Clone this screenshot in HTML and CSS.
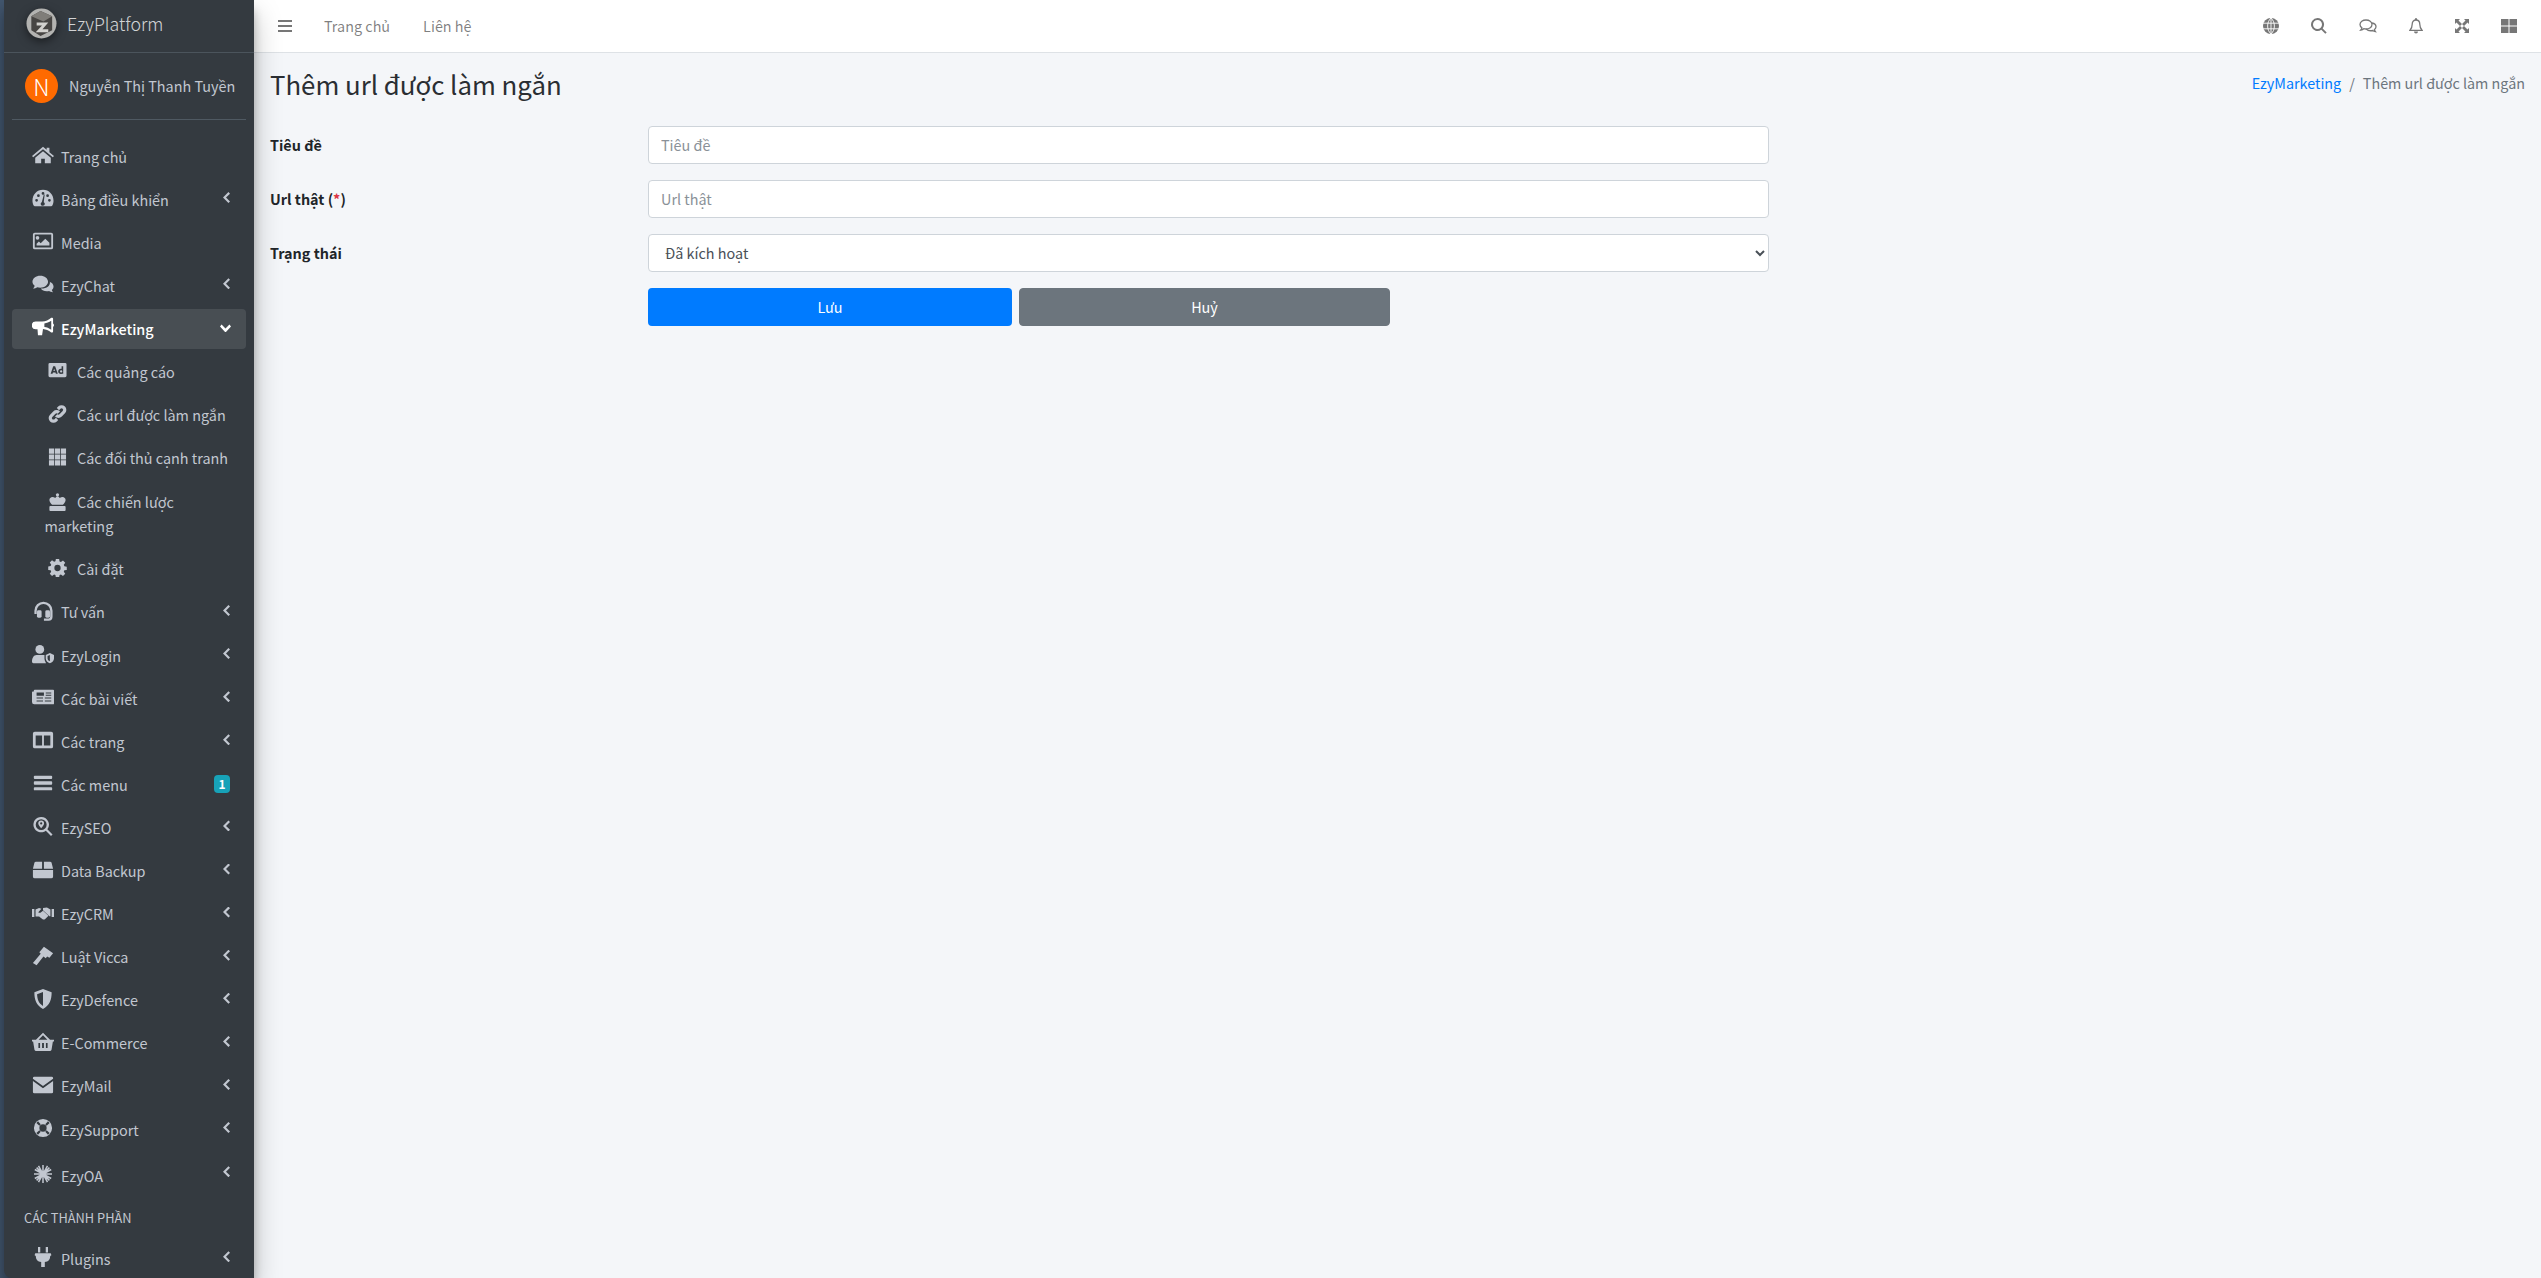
FILE: index.html
```html
<!DOCTYPE html>
<html lang="vi">
<head>
<meta charset="utf-8">
<title>Thêm url được làm ngắn</title>
<link rel="stylesheet" href="styles.css">
</head>
<body>
<div class="app">
<aside class="sidebar">
  <div class="brand">
    <svg class="logo" viewBox="0 0 32 32"><circle cx="16" cy="16" r="15.500" fill="#b3b3b1"/><path d="M15 3l12 5.500V23l-12 6-9.500-6V8.500z" fill="#474543"/><path d="M15 3l12 5.500-9 5.500-12.500-5.500z" fill="#7f7d79"/><path d="M11 15h12l-6 7h6v3H10l6.500-7H11z" fill="#d2d1ce"/></svg>
    <span class="brand-text">EzyPlatform</span>
  </div>
  <div class="user"><span class="avatar">N</span><span class="user-name">Nguyễn Thị Thanh Tuyền</span></div>
  <nav class="menu">
    <a class="item"><svg class="ic" viewBox="0 0 24 20"><path d="M12 1L0 11l1.300 1.400L12 3.600l10.700 8.800L24 11l-5-4.100V2h-3v2.400zM3.500 13v6h6.500v-5h4v5h6.500v-6L12 6z"/></svg><span>Trang chủ</span></a>
    <a class="item"><svg class="ic" viewBox="0 0 24 20"><path fill-rule="evenodd" d="M12 1C5.400 1 .5 6.100.5 13c0 2 .5 3.800 1.300 5.300.3.500.8.700 1.300.7h17.800c.5 0 1-.2 1.300-.7.8-1.500 1.300-3.300 1.300-5.300C23.500 6.100 18.600 1 12 1zM5 14a1.500 1.500 0 110-3 1.500 1.500 0 010 3zm2-5a1.500 1.500 0 110-3 1.500 1.500 0 010 3zm5-2.500a1.500 1.500 0 110-3 1.500 1.500 0 010 3zM19 14a1.500 1.500 0 110-3 1.500 1.500 0 010 3zm-2-5a1.500 1.500 0 110-3 1.500 1.500 0 010 3zm-3 7.500a2.300 2.300 0 01-4.500.4c-.2-1 .3-2 1.200-2.400L13 6l.8.3-1 8.200c.7.400 1.200 1.200 1.200 2z"/></svg><span>Bảng điều khiển</span><i class="chev"></i></a>
    <a class="item"><svg class="ic" viewBox="0 0 24 20"><path fill-rule="evenodd" d="M3 1h18a2 2 0 012 2v14a2 2 0 01-2 2H3a2 2 0 01-2-2V3a2 2 0 012-2zm0 2v14h18V3zm3 1.500a2 2 0 110 4 2 2 0 010-4zM5 15v-2l2.500-2.500 2 2 5-5 4.500 4.500V15z"/></svg><span>Media</span></a>
    <a class="item"><svg class="ic" viewBox="0 0 24 20"><path d="M9 1c4.700 0 8.500 2.900 8.500 6.500S13.700 14 9 14c-1.100 0-2.200-.2-3.200-.5C4.600 14.400 3 15 1 15c1-1 1.700-2.300 1.900-3.200C1.100 10.600.5 9 .5 7.500.5 3.900 4.300 1 9 1z"/><path d="M19 7.500c2.600.7 4.500 2.800 4.500 5.200 0 1.500-.7 2.800-1.900 3.800.2.900.9 1.800 1.400 2.500-1.800 0-3.400-.6-4.300-1.300-.8.200-1.700.3-2.700.3-2.800 0-5.200-1.200-6.300-3 6 .3 10.500-3 9.800-7.500z"/></svg><span>EzyChat</span><i class="chev"></i></a>
    <a class="item active"><svg class="ic" viewBox="0 0 24 20"><path fill-rule="evenodd" d="M21 0h1a1 1 0 011 1v5.300c.6.400 1 1 1 1.700s-.4 1.300-1 1.700V15a1 1 0 01-1 1h-1c-3-2.500-6-3.500-9-3.900L11 19H6.500L6 12.500H4A4 4 0 014 4h7c4 0 7-1.500 10-4zm0 3.200c-2.400 1.700-5 2.600-7.500 2.900v4c2.500.3 5.100 1.200 7.500 2.900z"/></svg><span>EzyMarketing</span><i class="chev down"></i></a>
    <a class="item sub"><svg class="ic" viewBox="0 0 20 16"><path fill-rule="evenodd" d="M2 .5h16A1.500 1.500 0 0119.500 2v12a1.500 1.500 0 01-1.500 1.500H2A1.500 1.500 0 01.5 14V2A1.500 1.500 0 012 .5zM5.500 4L2.800 12h2l.4-1.300h2.700l.4 1.300h2L7.500 4zm1 2.600l.8 2.500H5.700zM16 4h-1.700v2.700a2.800 2.800 0 10.2 5.300H16zm-2.200 4.300a1.200 1.200 0 11.100 2.400 1.200 1.200 0 01-.1-2.400z"/></svg><span>Các quảng cáo</span></a>
    <a class="item sub"><svg class="ic" viewBox="0 0 20 20"><path fill="none" stroke-width="3.600" d="M8.500 11.500a3.500 3.500 0 005 0L17 8a3.500 3.500 0 00-5-5l-1.500 1.500M11.500 8.500a3.500 3.500 0 00-5 0L3 12a3.500 3.500 0 005 5l1.500-1.500"/></svg><span>Các url được làm ngắn</span></a>
    <a class="item sub"><svg class="ic" viewBox="0 0 20 18"><path d="M1 0h5.500v5.500H1zM7.300 0h5.400v5.500H7.300zM13.500 0H19v5.500h-5.500zM1 6.300h5.500v5.400H1zM7.300 6.300h5.400v5.400H7.300zM13.500 6.300H19v5.400h-5.500zM1 12.500h5.500V18H1zM7.300 12.500h5.400V18H7.300zM13.500 12.500H19V18h-5.500z"/></svg><span>Các đối thủ cạnh tranh</span></a>
    <a class="item sub wrap"><svg class="ic" viewBox="0 0 20 20"><circle cx="10" cy="2" r="1.800"/><path d="M10 3.500c1 0 2 1 2.500 2 1-.8 2-1 3-1 2 0 3.500 1.500 3.500 3.300 0 2-1.500 3.700-3 5.200H4C2.500 11.500 1 9.800 1 7.800 1 6 2.500 4.500 4.500 4.500c1 0 2 .2 3 1 .5-1 1.500-2 2.500-2zM2 14.500h16a1 1 0 011 1V19a1 1 0 01-1 1H2a1 1 0 01-1-1v-3.500a1 1 0 011-1z"/></svg>Các chiến lược marketing</a>
    <a class="item sub"><svg class="ic" viewBox="0 0 20 20"><path fill-rule="evenodd" d="M8.200 0h3.600l.5 2.700 1.500.6 2.300-1.600 2.500 2.500-1.600 2.300.6 1.500 2.700.5v3.600l-2.700.5-.6 1.500 1.600 2.300-2.500 2.500-2.300-1.600-1.500.6-.5 2.700H8.200l-.5-2.700-1.500-.6-2.300 1.600-2.500-2.500 1.600-2.300-.6-1.500-2.700-.5V8.300l2.700-.5.6-1.500-1.600-2.300 2.500-2.500 2.300 1.600 1.500-.6zM10 6.500a3.500 3.500 0 100 7 3.500 3.500 0 000-7z"/></svg><span>Cài đặt</span></a>
    <a class="item"><svg class="ic" viewBox="1 1 21 21.500"><path fill="none" stroke-width="2.500" d="M3.500 15v-3.500a8.500 8.500 0 0117 0V18a3 3 0 01-3 3h-5"/><rect x="5" y="11" width="5" height="8" rx="1.500"/><rect x="14" y="11" width="5" height="8" rx="1.500"/></svg><span>Tư vấn</span><i class="chev"></i></a>
    <a class="item"><svg class="ic" viewBox="0 0 24 20"><circle cx="8.500" cy="5" r="4.800"/><path d="M5 11h7c.6 0 1.100 0 1.600.2V15c0 1.700.7 3 1.700 5H1.500A1.500 1.500 0 010 18.500C0 14 2 11 5 11z"/><path fill-rule="evenodd" d="M19.500 9l4.500 2v4c0 2.500-2 4.500-4.500 5-2.500-.5-4.500-2.500-4.500-5v-4zm0 2.200L17 12.300V15c0 1.300 1 2.500 2.500 3z"/></svg><span>EzyLogin</span><i class="chev"></i></a>
    <a class="item"><svg class="ic" viewBox="0 0 24 18"><path fill-rule="evenodd" d="M3 1h20a1 1 0 011 1v14a1 1 0 01-1 1H2.500A2.500 2.500 0 010 14.500V4c0-.5.5-1 1-1h1V2a1 1 0 011-1zm2 3v3.500h8V4zm10 0v1.300h6V4zm0 2.500v1h6v-1zM5 9.500v1.200h7V9.500zm9 0v1.200h7V9.500zM5 12.700v1.200h7v-1.200zm9 0v1.200h7v-1.200z"/></svg><span>Các bài viết</span><i class="chev"></i></a>
    <a class="item"><svg class="ic" viewBox="0 0 24 20"><path fill-rule="evenodd" d="M3 1h18a2 2 0 012 2v14a2 2 0 01-2 2H3a2 2 0 01-2-2V3a2 2 0 012-2zm1 4v11h7V5zm9 0v11h7V5z"/></svg><span>Các trang</span><i class="chev"></i></a>
    <a class="item"><svg class="ic" viewBox="0 0 24 20"><path d="M3 2h18a1 1 0 011 1v1.500a1 1 0 01-1 1H3a1 1 0 01-1-1V3a1 1 0 011-1zM3 8.200h18a1 1 0 011 1v1.600a1 1 0 01-1 1H3a1 1 0 01-1-1V9.200a1 1 0 011-1zM3 14.500h18a1 1 0 011 1V17a1 1 0 01-1 1H3a1 1 0 01-1-1v-1.500a1 1 0 011-1z"/></svg><span>Các menu</span><b class="badge">1</b></a>
    <a class="item"><svg class="ic" viewBox="0 0 24 22"><path fill-rule="evenodd" d="M10 1a8.500 8.500 0 016.800 13.600l5.700 5.700-1.700 1.700-5.700-5.700A8.500 8.500 0 1110 1zm0 2.500a6 6 0 100 12 6 6 0 000-12zM10 5a3.200 3.200 0 013.200 3.200C13.200 10 11 12.300 10 13.500 9 12.300 6.800 10 6.800 8.200A3.200 3.200 0 0110 5zm0 2a1.200 1.200 0 100 2.400A1.200 1.200 0 0010 7z"/></svg><span>EzySEO</span><i class="chev"></i></a>
    <a class="item"><svg class="ic" viewBox="0 0 24 20"><path d="M1 8.500l1.700-6.700C3 1.300 3.500 1 4.200 1H11v7.500zM13 1h6.800c.7 0 1.200.3 1.500.8L23 8.500H13zM1 10h22v7a2 2 0 01-2 2H3a2 2 0 01-2-2z"/></svg><span>Data Backup</span><i class="chev"></i></a>
    <a class="item"><svg class="ic" viewBox="0 0 28 18"><path d="M0 4h3v10H0zM25 4h3v10h-3z"/><path d="M4.500 4.500L9 2.500l3 1-4 4.500c1 1 2.500 1 3.500 0L14 6l7 6.500-4.500 4.500c-1 .5-2 .5-3 0L9 13.500H4.500z"/><path d="M14 2.500l5-.5 4.500 2.500V13h-1.300L14 5.500z"/></svg><span>EzyCRM</span><i class="chev"></i></a>
    <a class="item"><svg class="ic" viewBox="0 0 24 20"><path d="M13 0l10 7-4 5-2.500-1.500-1.500 2-2.500-2L5 20l-4-2.500 8.500-10L8 6z"/></svg><span>Luật Vicca</span><i class="chev"></i></a>
    <a class="item"><svg class="ic" viewBox="0 0 24 22"><path fill-rule="evenodd" d="M12 0l9.500 3.700c0 8-2 14.500-9.500 18.300C4.500 18.200 2.500 11.700 2.500 3.700zm0 3.300L5.500 5.800c.2 5.500 1.700 10 6.500 12.800z"/></svg><span>EzyDefence</span><i class="chev"></i></a>
    <a class="item"><svg class="ic" viewBox="0 0 24 20"><path fill-rule="evenodd" d="M12 0l7.700 7.500H24v2h-1.200l-1.500 9a1.500 1.500 0 01-1.500 1.200H4.200a1.500 1.500 0 01-1.500-1.200l-1.500-9H0v-2h4.300zm0 2.600L7.200 7.500h9.600zM7 11v5.500h1.800V11zm4 0v5.500h2V11zm4.200 0v5.500H17V11z"/></svg><span>E-Commerce</span><i class="chev"></i></a>
    <a class="item"><svg class="ic" viewBox="0 0 24 20"><path d="M1 2.500A1.500 1.500 0 012.500 1h19A1.500 1.500 0 0123 2.500v.8L12 11 1 3.300z"/><path d="M1 5.700l11 7.800 11-7.800v11.800a1.500 1.500 0 01-1.500 1.500h-19A1.500 1.500 0 011 17.500z"/></svg><span>EzyMail</span><i class="chev"></i></a>
    <a class="item"><svg class="ic" viewBox="0 0 22 22"><path fill-rule="evenodd" d="M11 1a10 10 0 110 20 10 10 0 010-20zm0 6a4 4 0 100 8 4 4 0 000-8zM5.500 3.700L3.700 5.500 7 8.500 8.500 7zm11 0L13.500 7 15 8.500l3.300-3zM7 13.500l-3.300 3 1.800 1.800 3-3.300zm8 0L13.500 15l3 3.300 1.800-1.800z"/></svg><span>EzySupport</span><i class="chev"></i></a>
    <a class="item oa"><svg class="ic" viewBox="0 0 20 20"><g stroke-width="1.500" fill="none"><path d="M10 1v18M1 10h18M3.600 3.600l12.800 12.800M16.400 3.600L3.600 16.400M5.500 1.800l9 16.400M14.500 1.800l-9 16.400M1.800 5.500l16.400 9M18.200 5.500l-16.400 9"/></g></svg><span>EzyOA</span><i class="chev"></i></a>
    <div class="header">CÁC THÀNH PHẦN</div>
    <a class="item"><svg class="ic" viewBox="0 0 24 22"><path d="M6.500 0H9v6H6.500zM15 0h2.500v6H15zM4 7h16a1 1 0 011 1v1.500h-1c0 4-2 6.500-6 7V22h-4v-5.500c-4-.5-6-3-6-7H3V8a1 1 0 011-1z"/></svg><span>Plugins</span><i class="chev"></i></a>
  </nav>
</aside>
<div class="main">
  <header class="topbar">
    <div class="top-left">
      <svg class="top-ic bars" viewBox="0 0 14 14"><path d="M0 1h14v2H0zM0 6h14v2H0zM0 11h14v2H0z"/></svg>
      <a class="top-link">Trang chủ</a>
      <a class="top-link">Liên hệ</a>
    </div>
    <div class="top-right">
      <svg class="top-ic w16" viewBox="0 0 16 16"><circle cx="8" cy="8" r="8"/><path class="globe-lines" d="M0 5.200h16M0 10.800h16M8 0v16M8 0C3.500 4 3.500 12 8 16M8 0c4.500 4 4.500 12 0 16"/></svg>
      <svg class="top-ic w16" viewBox="0 0 16 16"><path fill-rule="evenodd" d="M6.500 0a6.500 6.500 0 015.200 10.400l4 4-1.400 1.400-4-4A6.500 6.500 0 116.500 0zm0 2a4.500 4.500 0 100 9 4.500 4.500 0 000-9z"/></svg>
      <svg class="top-ic w18" viewBox="0 0 18 16"><path fill="none" stroke-width="1.300" d="M7 2c3.300 0 6 2 6 4.500S10.300 11 7 11c-.8 0-1.500-.1-2.200-.3C4 11.400 3 11.800 1.800 12c.6-.7 1-1.500 1.100-2.200C1.700 9 1 7.800 1 6.500 1 4 3.700 2 7 2z"/><path fill="none" stroke-width="1.300" d="M13 5c2.300.4 4 1.900 4 3.800 0 1.100-.6 2.100-1.600 2.800.1.700.5 1.400 1 2-1.100-.1-2-.5-2.700-1.100-2.500.6-5 0-6.500-1.500"/></svg>
      <svg class="top-ic w14" viewBox="0 0 14 16"><path fill="none" stroke-width="1.300" d="M7 2c2.400 0 3.800 1.900 3.800 4.300 0 3 .9 4.500 2.200 6H1c1.300-1.500 2.200-3 2.200-6C3.200 3.900 4.600 2 7 2z"/><path d="M6 .3h2v2H6zM5 13.500h4a2 2 0 01-4 0z"/></svg>
      <svg class="top-ic w14" viewBox="0 0 14 14"><path d="M0 0h5L3.500 1.500 7 5 5 7 1.500 3.500 0 5zM14 0v5l-1.500-1.500L9 7 7 5l3.500-3.500L9 0zM0 14V9l1.500 1.500L5 7l2 2-3.500 3.500L5 14zM14 14H9l1.500-1.500L7 9l2-2 3.500 3.500L14 9z"/></svg>
      <svg class="top-ic w16" viewBox="0 0 16 14"><path d="M0 0h7.500v6.500H0zM8.500 0H16v6.500H8.500zM0 7.500h7.500V14H0zM8.500 7.500H16V14H8.500z"/></svg>
    </div>
  </header>
  <main class="content">
    <div class="page-head">
      <h1>Thêm url được làm ngắn</h1>
      <div class="crumbs"><a>EzyMarketing</a><i>/</i><span>Thêm url được làm ngắn</span></div>
    </div>
    <form class="form">
      <div class="row"><label>Tiêu đề</label><input class="ctl" placeholder="Tiêu đề"></div>
      <div class="row"><label>Url thật (<em>*</em>)</label><input class="ctl" placeholder="Url thật"></div>
      <div class="row"><label>Trạng thái</label><select class="ctl"><option>Đã kích hoạt</option></select></div>
      <div class="row btn-row"><div class="spacer"></div><div class="btns"><button type="button" class="btn save">Lưu</button><button type="button" class="btn cancel">Huỷ</button></div></div>
    </form>
  </main>
</div>
</div>
</body>
</html>
```
FILE: styles.css
```css
* { box-sizing: border-box; }
html, body { margin: 0; height: 100%; }
body { font-family: "Noto Sans CJK JP", "Noto Sans", sans-serif; font-size: 14.400px; line-height: 24px; background: #f4f6f9; overflow: hidden; color: #212529; }
.app { display: flex; height: 1278px; background: #42566e; padding-left: 4px; }
.sidebar { width: 250px; flex: none; height: 1278px; background: #343a40; overflow: hidden; color: #c2c7d0; position: relative; z-index: 2; box-shadow: 0 14px 28px rgba(0,0,0,.25), 0 10px 10px rgba(0,0,0,.22); border-bottom-left-radius: 8px; }
.brand { height: 53px; display: flex; align-items: center; padding-left: 22px; border-bottom: 1px solid #4b545c; }
.logo { width: 31px; height: 31px; margin-top: -5px; filter: drop-shadow(0 3px 5px rgba(0,0,0,.5)); }
.brand-text { font-size: 17.800px; font-weight: 300; color: rgba(255,255,255,.8); margin-left: 10px; margin-top: -6px; }
.user { height: 67px; margin: 0 8px; display: flex; align-items: center; padding-left: 13px; border-bottom: 1px solid #4f5962; }
.avatar { width: 33px; height: 34px; border-radius: 50%; background: #ff6a00; color: #fff; font-size: 23px; font-weight: 300; display: flex; align-items: center; justify-content: center; }
.user-name { margin-left: 11px; color: #c2c7d0; white-space: nowrap; }
.menu { padding: 17px 8px 0; }
.item { display: flex; align-items: center; height: 40px; margin-bottom: 3.100px; position: relative; padding: 0 0 1px 19.500px; border-radius: 4px; color: #c2c7d0; }
.item > span { white-space: nowrap; }
.ic { width: 22px; height: 20px; flex: none; margin-right: 7.500px; margin-top: -3px; fill: #c2c7d0; stroke: #c2c7d0; stroke-width: 0; }
.active { background: rgba(255,255,255,.1); color: #fff; font-weight: 500; }
.active .ic { fill: #fff; }
.chev { position: absolute; right: 16px; top: 12px; width: 7px; height: 11px; background: #c2c7d0; clip-path: polygon(100% 14%, 78% 0, 0 50%, 78% 100%, 100% 86%, 43% 50%); }
.chev.down { right: 15px; top: 15px; width: 11px; height: 8px; background: #fff; clip-path: polygon(14% 0, 0 25%, 50% 100%, 100% 25%, 86% 0, 50% 50%); }
.sub { padding-left: 36px; }
.sub .ic { width: 19px; height: 18px; margin-right: 10px; }
.wrap { display: block; height: 65px; padding: 8px 12px 0 32.500px; }
.wrap .ic { display: inline-block; vertical-align: -3px; margin: 0 10px 0 3.500px; }
.oa { height: 46px; }
.oa .ic { margin-top: -4px; }
.oa .chev { top: 13px; }
.header { font-size: 12.800px; padding-left: 12px; height: 32px; line-height: 32px; color: #c2c7d0; margin-bottom: 5px; }
.badge { position: absolute; right: 16px; top: 10px; width: 16px; height: 18px; border-radius: 4px; background: #17a2b8; color: #fff; font-size: 12px; line-height: 18px; font-weight: 700; text-align: center; }
.main { flex: 1; min-width: 0; background: #f4f6f9; }
.topbar { height: 53px; background: #fff; border-bottom: 1px solid #dee2e6; display: flex; align-items: center; justify-content: space-between; padding: 0 24px; }
.top-left, .top-right { display: flex; align-items: center; }
.top-ic { height: 16px; fill: #777; stroke: #777; stroke-width: 0; }
.bars { width: 14px; margin-right: 32px; }
.w14 { width: 14px; } .w16 { width: 16px; } .w18 { width: 18px; }
.globe-lines { fill: none; stroke: #fff; stroke-width: .9; }
.top-right { gap: 32px; }
.top-link { color: rgba(0,0,0,.5); margin: -1px 33px 0 0; }
.content { padding: 0 16px; }
.page-head { display: flex; justify-content: space-between; align-items: flex-start; height: 73px; }
h1 { margin: 10px 0 0; font-size: 25.800px; font-weight: 400; color: #2a2e33; line-height: 42px; }
.crumbs { display: flex; align-items: center; margin-top: 18px; color: #6c757d; font-size: 14.350px; }
.crumbs a { color: #007bff; }
.crumbs i { font-style: normal; padding: 0 8px; }
.form { width: 1499px; }
.row { display: flex; align-items: flex-start; margin-bottom: 16px; }
.row label { width: 378px; flex: none; font-weight: 700; line-height: 38px; color: #212529; }
.row em { font-style: normal; color: #dc3545; }
.ctl { width: 1121px; height: 38px; padding: 5px 12px 7px; border: 1px solid #ced4da; border-radius: 4px; background: #fff; font: inherit; color: #495057; outline: none; }
.ctl::placeholder { color: #8a9198; }
.btn-row { margin: 0; }
.spacer { width: 378px; flex: none; }
.btns { display: flex; gap: 7px; }
.btn { height: 38px; border-radius: 4px; border: 1px solid transparent; color: #fff; font: inherit; padding: 0; }
.save { width: 364px; background: #007bff; }
.cancel { width: 371px; background: #6c757d; border-color: #6c757d; }
```
